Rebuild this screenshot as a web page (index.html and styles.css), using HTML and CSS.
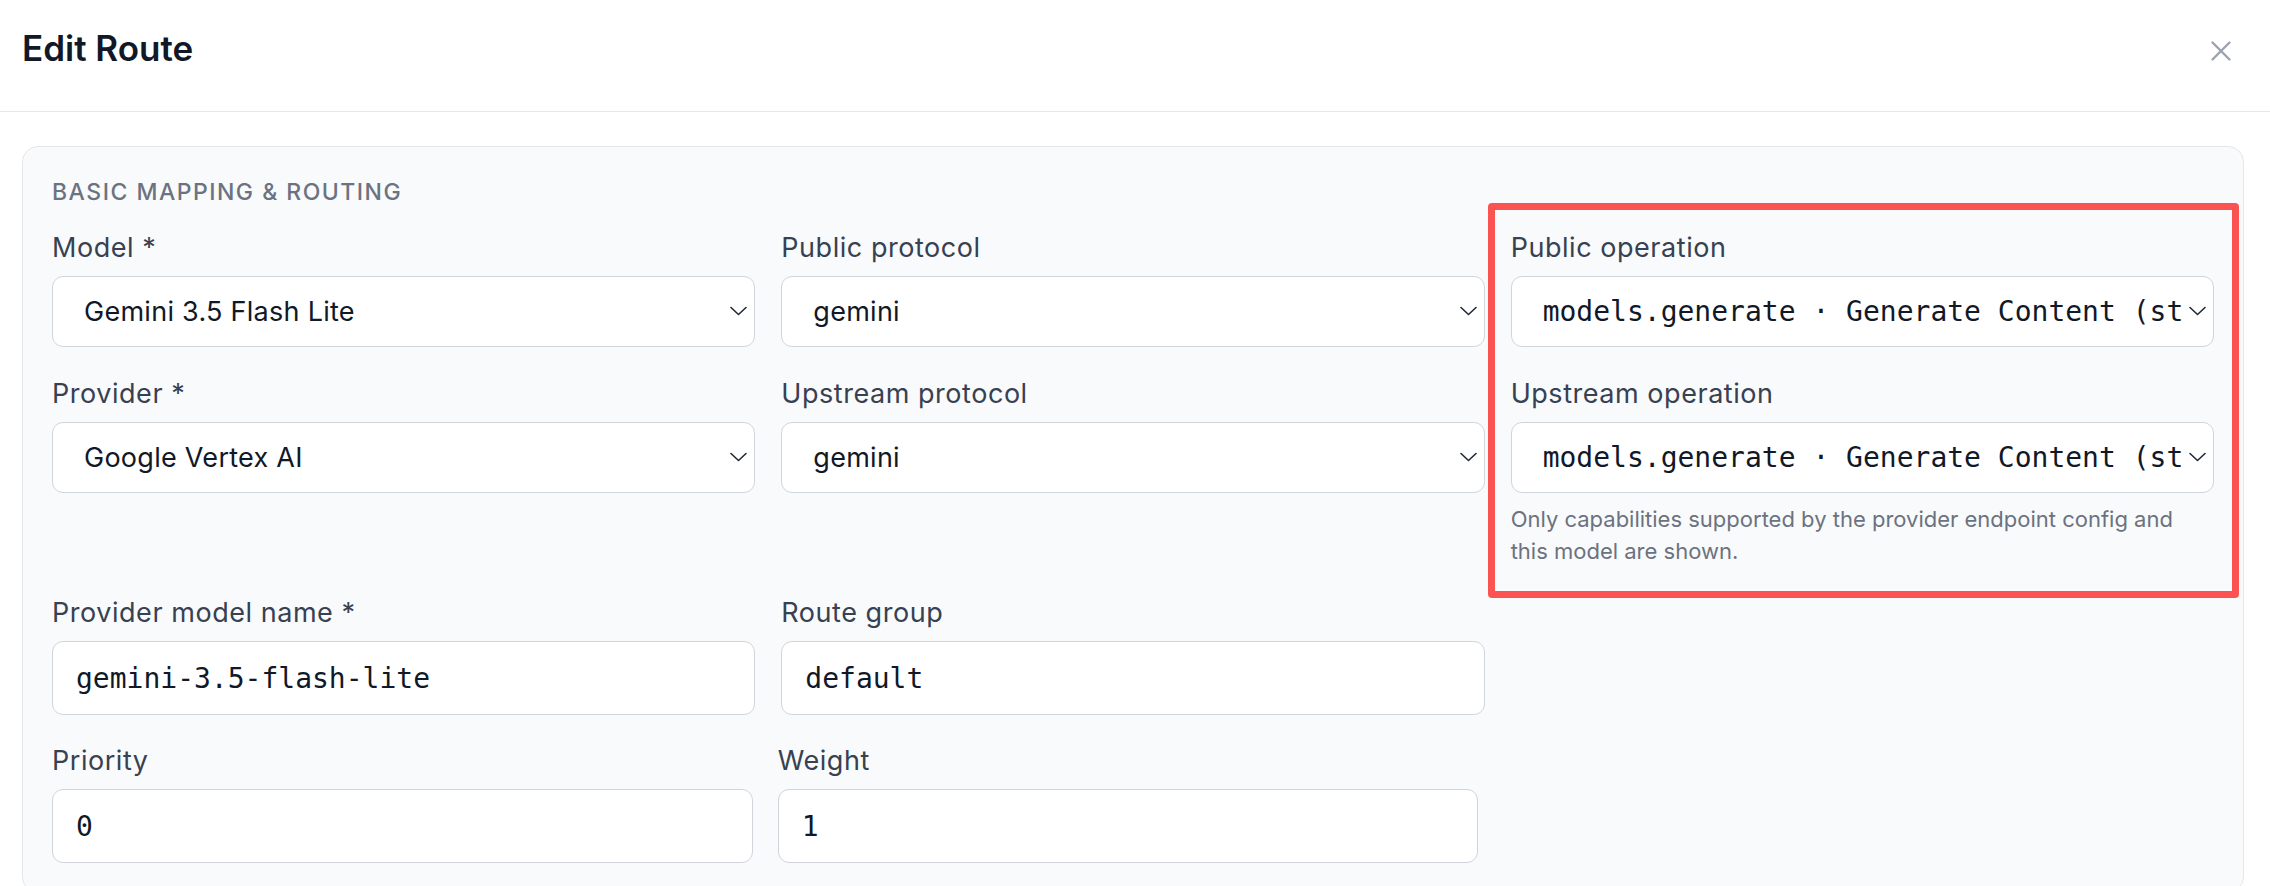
FILE: index.html
```html
<!DOCTYPE html>
<html lang="en">
<head>
    <meta charset="UTF-8">
    <meta name="viewport" content="width=device-width, initial-scale=1.0">
    <title>Edit Route</title>
    <link rel="stylesheet" href="styles.css">
</head>
<body>
    <div class="modal">
        <div class="modal-header">
            <h2>Edit Route</h2>
            <button class="close-button" type="button" aria-label="Close">
                <svg width="34" height="34" viewBox="0 0 24 24" fill="none" stroke="currentColor" stroke-width="1.7" stroke-linecap="round" stroke-linejoin="round"><path d="M18 6 6 18M6 6l12 12"/></svg>
            </button>
        </div>

        <div class="modal-body">
            <section class="section">
                <h3>Basic mapping &amp; routing</h3>

                <div class="form-grid">
                    <div class="field">
                        <label for="model">Model *</label>
                        <div class="select-wrap">
                            <select id="model"><option>Gemini 3.5 Flash Lite</option></select>
                            <svg class="chevron" width="17" height="10" viewBox="0 0 17 10"><polyline points="1,1.5 8.5,8.5 16,1.5"/></svg>
                        </div>
                    </div>
                    <div class="field">
                        <label for="publicProtocol">Public protocol</label>
                        <div class="select-wrap">
                            <select id="publicProtocol"><option>gemini</option></select>
                            <svg class="chevron" width="17" height="10" viewBox="0 0 17 10"><polyline points="1,1.5 8.5,8.5 16,1.5"/></svg>
                        </div>
                    </div>
                    <div class="field">
                        <label for="publicOperation">Public operation</label>
                        <div class="select-wrap">
                            <select id="publicOperation" class="mono"><option>models.generate · Generate Content (standard)</option></select>
                            <svg class="chevron" width="17" height="10" viewBox="0 0 17 10"><polyline points="1,1.5 8.5,8.5 16,1.5"/></svg>
                        </div>
                    </div>

                    <div class="field">
                        <label for="provider">Provider *</label>
                        <div class="select-wrap">
                            <select id="provider"><option>Google Vertex AI</option></select>
                            <svg class="chevron" width="17" height="10" viewBox="0 0 17 10"><polyline points="1,1.5 8.5,8.5 16,1.5"/></svg>
                        </div>
                    </div>
                    <div class="field">
                        <label for="upstreamProtocol">Upstream protocol</label>
                        <div class="select-wrap">
                            <select id="upstreamProtocol"><option>gemini</option></select>
                            <svg class="chevron" width="17" height="10" viewBox="0 0 17 10"><polyline points="1,1.5 8.5,8.5 16,1.5"/></svg>
                        </div>
                    </div>
                    <div class="field">
                        <label for="upstreamOperation">Upstream operation</label>
                        <div class="select-wrap">
                            <select id="upstreamOperation" class="mono"><option>models.generate · Generate Content (standard)</option></select>
                            <svg class="chevron" width="17" height="10" viewBox="0 0 17 10"><polyline points="1,1.5 8.5,8.5 16,1.5"/></svg>
                        </div>
                        <p class="hint">Only capabilities supported by the provider endpoint config and this model are shown.</p>
                    </div>

                    <div class="field">
                        <label for="providerModel">Provider model name *</label>
                        <input type="text" id="providerModel" value="gemini-3.5-flash-lite">
                    </div>
                    <div class="field">
                        <label for="routeGroup">Route group</label>
                        <input type="text" id="routeGroup" value="default">
                    </div>
                </div>

                <div class="form-grid form-grid-numbers">
                    <div class="field">
                        <label for="priority">Priority</label>
                        <input type="text" id="priority" value="0">
                    </div>
                    <div class="field">
                        <label for="weight">Weight</label>
                        <input type="text" id="weight" value="1">
                    </div>
                </div>

                <div class="highlight"></div>
            </section>
        </div>
    </div>
</body>
</html>
```

FILE: styles.css
```css
body {
    margin: 0;
    background-color: #ffffff;
    color: #111827;
    font-family: Inter, "Noto Sans", sans-serif;
}
.modal-header {
    display: flex;
    justify-content: space-between;
    align-items: flex-start;
    height: 48px;
    padding: 24px 32px 39px 22px;
    border-bottom: 1px solid #e5e7eb;
}
h2 {
    margin: 0;
    font-size: 35px;
    font-weight: 600;
    line-height: 48px;
    color: #111827;
}
.close-button {
    display: flex;
    width: 34px;
    height: 34px;
    margin-top: 10px;
    padding: 0;
    border: none;
    background: none;
    color: #9ca3af;
    cursor: pointer;
}
.modal-body {
    padding: 34px 26px 0 22px;
}
.section {
    position: relative;
    padding: 29px;
    background-color: #f9fafb;
    border: 1px solid #e5e7eb;
    border-radius: 16px;
}
h3 {
    margin: 0 0 21px;
    font-size: 23px;
    font-weight: 500;
    line-height: 32px;
    letter-spacing: 0.065em;
    text-transform: uppercase;
    color: #6b7280;
}
.form-grid {
    display: grid;
    grid-template-columns: repeat(3, 1fr);
    column-gap: 26px;
    row-gap: 27.5px;
}
.form-grid-numbers {
    margin-top: 27px;
    margin-right: 10px;
    column-gap: 25px;
}
.field {
    min-width: 0;
}
label {
    display: block;
    margin-bottom: 10px;
    font-size: 27px;
    line-height: 37px;
    letter-spacing: 0.02em;
    color: #374151;
}
.select-wrap {
    position: relative;
}
select {
    appearance: none;
    -webkit-appearance: none;
    display: block;
    width: 100%;
    height: 71px;
    padding: 0 30px 0 31px;
    background-color: #ffffff;
    border: 1px solid #d1d5db;
    border-radius: 11px;
    font-family: Inter, "Noto Sans", sans-serif;
    font-size: 27px;
    line-height: 69px;
    letter-spacing: 0.01em;
    color: #111827;
}
select.mono {
    font-family: "DejaVu Sans Mono", "Liberation Mono", monospace;
    font-size: 28px;
    letter-spacing: 0;
}
.chevron {
    position: absolute;
    top: 30px;
    right: 8px;
    fill: none;
    stroke: #1f2937;
    stroke-width: 1.6;
    stroke-linecap: round;
    stroke-linejoin: round;
    pointer-events: none;
}
input {
    display: block;
    box-sizing: border-box;
    width: 100%;
    height: 74px;
    padding: 0 23px;
    background-color: #ffffff;
    border: 1px solid #d1d5db;
    border-radius: 11px;
    font-family: "DejaVu Sans Mono", "Liberation Mono", monospace;
    font-size: 28px;
    color: #111827;
}
.hint {
    margin: 10px 0 0;
    font-size: 22px;
    line-height: 32px;
    color: #6b7280;
}
/* red outline drawn around the operation fields */
.highlight {
    position: absolute;
    top: 55.7px;
    left: 1465.3px;
    right: 4px;
    height: 395px;
    box-sizing: border-box;
    border: 7.5px solid #fb5252;
    border-radius: 4px;
    pointer-events: none;
}
```
